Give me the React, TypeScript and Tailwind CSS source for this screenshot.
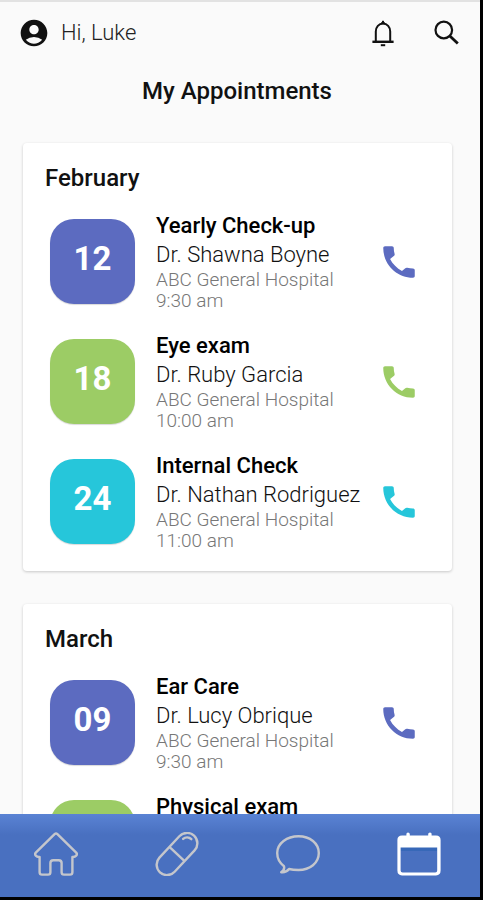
import React from 'react';
import { MdAccountCircle } from 'react-icons/md';

const months = [
  {
    name: 'February',
    appointments: [
      { day: '12', title: 'Yearly Check-up', doctor: 'Dr. Shawna Boyne', time: '9:30 am', tile: 'bg-[#5c6bc0]', icon: 'text-[#5c6bc0]' },
      { day: '18', title: 'Eye exam', doctor: 'Dr. Ruby Garcia', time: '10:00 am', tile: 'bg-[#9ccc65]', icon: 'text-[#9ccc65]' },
      { day: '24', title: 'Internal Check', doctor: 'Dr. Nathan Rodriguez', time: '11:00 am', tile: 'bg-[#26c6da]', icon: 'text-[#26c6da]' },
    ],
  },
  {
    name: 'March',
    appointments: [
      { day: '09', title: 'Ear Care', doctor: 'Dr. Lucy Obrique', time: '9:30 am', tile: 'bg-[#5c6bc0]', icon: 'text-[#5c6bc0]' },
      { day: '15', title: 'Physical exam', doctor: 'Dr. Ruby Garcia', time: '10:00 am', tile: 'bg-[#9ccc65]', icon: 'text-[#9ccc65]' },
    ],
  },
];

const BellIcon = () => (
  <svg className="h-8 w-8" viewBox="0 0 32 32" fill="none" stroke="currentColor" strokeWidth="2">
    <path d="M8.8 24V14.5C8.8 10 11.8 6.6 16 6.6S23.2 10 23.2 14.5V24" />
    <path d="M5.4 24.8H26.6" strokeWidth="2.4" />
    <path d="M13.8 28.2H18.2" />
    <path d="M14 6.8L16 3.8L18 6.8Z" fill="currentColor" strokeWidth="1" />
  </svg>
);

const SearchIcon = () => (
  <svg className="h-8 w-8" viewBox="0 0 32 32" fill="none" stroke="currentColor" strokeWidth="2.2">
    <circle cx="12.8" cy="13" r="8.3" />
    <path d="M18.6 18.8L26.8 26.6" strokeWidth="2.8" />
  </svg>
);

const PhoneIcon = () => (
  <svg className="h-[42px] w-[42px]" viewBox="0 0 24 24" fill="currentColor">
    <path d="M6.9 10.3c1.5 2.9 3.9 5.3 6.8 6.8l1.9-1.5c.3-.3.7-.4 1.1-.3 1.1.3 2.2.4 3.3.4.55 0 1 .45 1 1V20c0 .55-.45 1-1 1-9.39 0-17-7.61-17-17 0-.55.45-1 1-1h4c.55 0 1 .45 1 1 0 1.2.15 2.3.5 3.4.1.35 0 .75-.3 1z" />
  </svg>
);

const HomeIcon = () => (
  <svg className="h-11 w-11" viewBox="0 0 44 44" fill="none" stroke="currentColor" strokeWidth="2.4" strokeLinejoin="round">
    <path d="M20.6 2.2Q22 .9 23.4 2.2L42.2 20.6Q43.6 22.2 42.2 23.6Q41 25 39 25H38.4V40.2Q38.4 42.6 36 42.6H30Q27.6 42.6 27.6 40.2V31Q27.6 28.2 24.8 28.2H19.2Q16.4 28.2 16.4 31V40.2Q16.4 42.6 14 42.6H8Q5.6 42.6 5.6 40.2V25H5Q3 25 1.8 23.6Q.4 22.2 1.8 20.6Z" />
  </svg>
);

const PillIcon = () => (
  <svg className="h-11 w-11" viewBox="0 0 44 44" fill="none" stroke="currentColor" strokeWidth="2.4">
    <g transform="rotate(-47 22 22)">
      <rect x="-3" y="11.6" width="50" height="20.8" rx="10.4" />
      <path d="M22 11.6V32.4" />
      <path d="M37.2 16.2A6 6 0 0 1 42.6 22.4" strokeLinecap="round" />
    </g>
  </svg>
);

const ChatIcon = () => (
  <svg className="h-11 w-11" viewBox="0 0 44 44" fill="none" stroke="currentColor" strokeWidth="2.4" strokeLinejoin="round">
    <path d="M22.5 4.2C34 4.2 42.8 11.4 42.8 21C42.8 31 34 38 22.5 38C19 38 16 37.8 13 37C11 39.6 8.4 40.6 5.2 40.2C7.6 38.6 8.6 36.4 8 34.2C3.6 30.8 1.2 26.4 1.2 21C1.2 11.4 11 4.2 22.5 4.2Z" />
  </svg>
);

const CalendarIcon = () => (
  <svg className="h-11 w-11" viewBox="0 0 44 44" fill="none">
    <path d="M3.6 15H40V19H3.6Z" fill="#2660b0" fillOpacity="0.5" />
    <path
      d="M5 3.4H9.4V2Q9.4 .4 11 .4T12.8 2V3.4H31.2V2Q31.2 .4 33 .4T34.6 2V3.4H39Q43.6 3.4 43.6 8V38.6Q43.6 43.4 39 43.4H5Q.4 43.4 .4 38.6V8Q.4 3.4 5 3.4ZM3.6 15.6V38.4Q3.6 40.4 5.6 40.4H38.2Q40.2 40.4 40.2 38.4V15.6Z"
      fill="currentColor"
      fillRule="evenodd"
    />
  </svg>
);

const tabs = [
  { label: 'Home', Icon: HomeIcon, color: 'text-[#c4c6cc]' },
  { label: 'Medication', Icon: PillIcon, color: 'text-[#c4c6cc]' },
  { label: 'Messages', Icon: ChatIcon, color: 'text-[#c4c6cc]' },
  { label: 'Calendar', Icon: CalendarIcon, color: 'text-white' },
];

const App = () => {
  return (
    <div className="flex h-screen flex-col border-r-[3px] border-b-[3px] border-black bg-[#fafafa] font-[Roboto,sans-serif]">
      <header className="flex items-center border-t-2 border-[#e2e2e2] pt-[15px] pr-[17px] pl-[18px]">
        <MdAccountCircle className="h-8 w-8 text-[#111]" />
        <span className="ml-[11px] text-[22px] leading-8 font-light text-[#222]">Hi, Luke</span>
        <button aria-label="Notifications" className="ml-auto text-[#111]">
          <BellIcon />
        </button>
        <button aria-label="Search" className="ml-8 text-[#111]">
          <SearchIcon />
        </button>
      </header>

      <main className="min-h-0 flex-1 overflow-y-auto [scrollbar-width:none]">
        <h1 className="mt-[26px] pr-[6px] text-center text-2xl leading-8 font-medium text-[#111]">My Appointments</h1>

        <div className="mt-9 flex flex-col gap-[33px] pr-[28px] pl-[23px]">
          {months.map((month) => (
            <section key={month.name} className="rounded-sm bg-white pt-[19px] pb-[27px] shadow-[0_1px_3px_rgba(0,0,0,0.2)]">
              <h2 className="pl-[22px] text-2xl leading-8 font-medium text-[#111]">{month.name}</h2>
              <ul className="mt-[25px] flex flex-col gap-[35px]">
                {month.appointments.map((item) => (
                  <li key={item.day} className="flex h-[85px] items-center pr-8 pl-[27px]">
                    <div className={`flex h-[85px] w-[85px] shrink-0 justify-center rounded-3xl pt-5 text-[33px] leading-10 font-bold text-white shadow-[0_1px_1px_rgba(0,0,0,0.15)] ${item.tile}`}>
                      {item.day}
                    </div>
                    <div className="ml-[21px] pb-px whitespace-nowrap">
                      <h3 className="text-[22px] leading-7 font-medium text-black">{item.title}</h3>
                      <p className="text-[22px] leading-[29px] font-light text-[#111]">{item.doctor}</p>
                      <p className="text-[19px] leading-[21px] font-light text-[#777]">ABC General Hospital</p>
                      <p className="text-[19px] leading-[21px] font-light text-[#777]">{item.time}</p>
                    </div>
                    <button aria-label={`Call ${item.doctor}`} className={`ml-auto ${item.icon}`}>
                      <PhoneIcon />
                    </button>
                  </li>
                ))}
              </ul>
            </section>
          ))}
        </div>
      </main>

      <nav className="flex h-[83px] shrink-0 justify-between bg-[#4970c0] bg-linear-to-b from-[#5a83d4] to-[#4970c0] to-25% pt-[18px] pr-[39px] pl-[34px]">
        {tabs.map(({ label, Icon, color }) => (
          <a key={label} href="#" aria-label={label} className={color}>
            <Icon />
          </a>
        ))}
      </nav>
    </div>
  );
};

export default App;
